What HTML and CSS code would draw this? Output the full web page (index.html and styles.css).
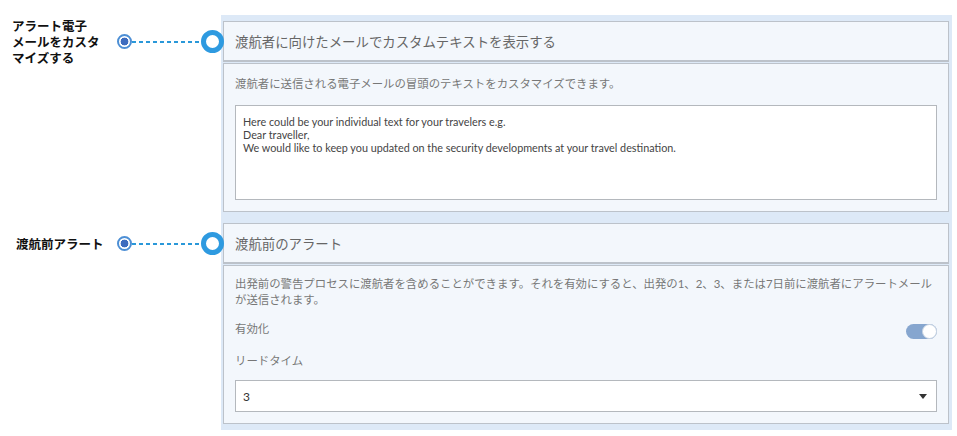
FILE: index.html
```html
<!DOCTYPE html>
<html lang="ja">
<head>
<meta charset="utf-8">
<title>Alert settings</title>
<link rel="stylesheet" href="styles.css">
</head>
<body>
<div class="page">
  <section class="row row-first">
    <div class="side">
      <div class="label label-a">アラート電子<br>メールをカスタ<br>マイズする</div>
      <span class="dot"></span>
      <span class="dash"></span>
      <span class="ring"></span>
    </div>
    <div class="panel panel-first">
      <div class="card head">渡航者に向けたメールでカスタムテキストを表示する</div>
      <div class="card body">
        <p class="desc">渡航者に送信される電子メールの冒頭のテキストをカスタマイズできます。</p>
        <div class="textarea">Here could be your individual text for your travelers e.g.<br>Dear traveller,<br>We would like to keep you updated on the security developments at your travel destination.</div>
      </div>
    </div>
  </section>
  <section class="row row-second">
    <div class="side">
      <div class="label label-b">渡航前アラート</div>
      <span class="dot"></span>
      <span class="dash"></span>
      <span class="ring"></span>
    </div>
    <div class="panel panel-second">
      <div class="card head">渡航前のアラート</div>
      <div class="card body body-second">
        <p class="desc">出発前の警告プロセスに渡航者を含めることができます。それを有効にすると、出発の1、2、3、または7日前に渡航者にアラートメールが送信されます。</p>
        <div class="field-row">
          <span class="field-label">有効化</span>
          <span class="toggle"><span class="knob"></span></span>
        </div>
        <div class="field-label lead">リードタイム</div>
        <div class="select"><span>3</span><span class="caret"></span></div>
      </div>
    </div>
  </section>
</div>
</body>
</html>
```
FILE: styles.css
```css
* { box-sizing: border-box; }
html, body { margin: 0; padding: 0; background: #ffffff; }
body {
  font-family: "Lato", "Noto Sans CJK JP", sans-serif;
  width: 957px;
  height: 436px;
  overflow: hidden;
}
.page { padding-top: 15px; }
.row { display: flex; align-items: flex-start; }
.side {
  width: 221px;
  flex-shrink: 0;
  display: flex;
  align-items: center;
  height: 41px;
  margin-top: 6px;
  position: relative;
  z-index: 2;
}
.label {
  width: 117px;
  flex-shrink: 0;
  font-family: "Noto Sans CJK JP", sans-serif;
  font-weight: 700;
  font-size: 12.5px;
  line-height: 16px;
  color: #111;
  padding-left: 12px;
}
.label-b { padding-left: 16px; }
.dot {
  width: 15px;
  height: 15px;
  flex-shrink: 0;
  border: 2px solid #4d8fd5;
  border-radius: 50%;
  background: radial-gradient(circle, #3d6cbf 0 3.6px, #ffffff 4.2px);
}
.dash {
  width: 69px;
  height: 2px;
  flex-shrink: 0;
  background: repeating-linear-gradient(to right, #2a98d9 0 4px, transparent 4px 7px);
}
.ring {
  width: 23px;
  height: 23px;
  flex-shrink: 0;
  border: 5px solid #2e9ae0;
  border-radius: 50%;
  background: #ffffff;
  margin-right: -3px;
}
.panel {
  width: 731px;
  background: #dde9f7;
  padding: 6px 3px 5px 2px;
}
.panel-second { padding-bottom: 6px; }
.card {
  background: #f3f7fc;
  border: 1px solid #bcc2ca;
}
.head {
  height: 41px;
  border-bottom: 2px solid #bcc2ca;
  padding: 0 11px;
  display: flex;
  align-items: center;
  font-family: "Noto Sans CJK JP", sans-serif;
  font-size: 13.4px;
  color: #666;
}
.body {
  margin-top: 1px;
  padding: 12px 11px 11px 11px;
}
.desc {
  margin: 0;
  font-size: 11.4px;
  line-height: 16px;
  color: #777;
  font-family: "Lato", "Noto Sans CJK JP", sans-serif;
}
.textarea {
  margin-top: 13px;
  height: 95px;
  background: #fff;
  border: 1px solid #b4b8bd;
  padding: 9px 7px;
  font-size: 10.8px;
  line-height: 13px;
  color: #444;
}
.body-second { padding-top: 10px; padding-bottom: 11px; }
.field-row {
  margin-top: 12px;
  display: flex;
  justify-content: space-between;
  align-items: flex-start;
}
.field-label {
  font-family: "Noto Sans CJK JP", sans-serif;
  font-size: 11.4px;
  line-height: 16px;
  color: #777;
}
.lead { margin-top: 13px; }
.toggle {
  margin-top: 4px;
  width: 31px;
  height: 15px;
  border-radius: 8px;
  background: #86a6cf;
  display: flex;
  justify-content: flex-end;
}
.knob {
  width: 15px;
  height: 15px;
  border-radius: 50%;
  background: #fff;
  border: 1px solid #c9d4e2;
}
.select {
  margin-top: 12px;
  height: 32px;
  background: #fff;
  border: 1px solid #b4b8bd;
  padding: 0 9px 0 7px;
  display: flex;
  align-items: center;
  justify-content: space-between;
  font-size: 12px;
  color: #333;
}
.caret {
  width: 0;
  height: 0;
  border-left: 4px solid transparent;
  border-right: 4px solid transparent;
  border-top: 5px solid #333;
}
```
